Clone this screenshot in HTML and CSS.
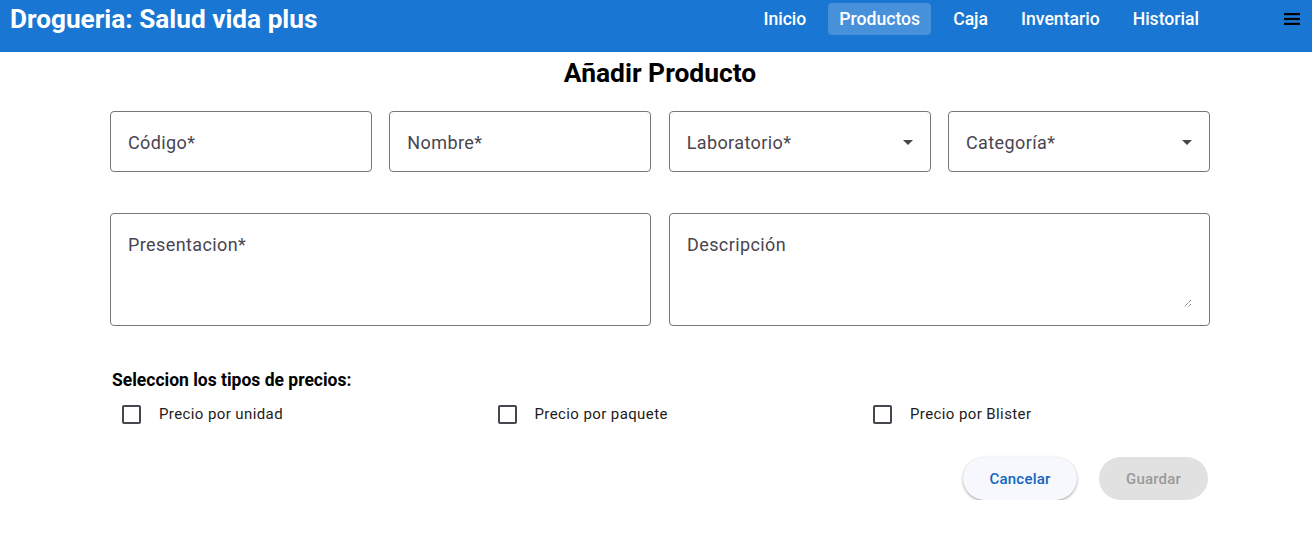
FILE: index.html
```html
<!DOCTYPE html>
<html lang="es">
<head>
<meta charset="utf-8">
<title>Drogueria: Salud vida plus</title>
<link rel="stylesheet" href="styles.css">
</head>
<body>
<header class="topbar">
  <div class="brand">Drogueria: Salud vida plus</div>
  <nav class="nav">
    <a class="nav-item">Inicio</a>
    <a class="nav-item active">Productos</a>
    <a class="nav-item">Caja</a>
    <a class="nav-item">Inventario</a>
    <a class="nav-item">Historial</a>
  </nav>
  <div class="menu-btn">
    <svg width="16" height="12" viewBox="0 0 16 12"><rect x="0" y="0" width="16" height="2.2" fill="#000"/><rect x="0" y="4.9" width="16" height="2.2" fill="#000"/><rect x="0" y="9.8" width="16" height="2.2" fill="#000"/></svg>
  </div>
</header>
<main class="page">
  <h1 class="title">Añadir Producto</h1>
  <div class="row row-4">
    <div class="field"><span class="label">Código*</span></div>
    <div class="field"><span class="label">Nombre*</span></div>
    <div class="field select"><span class="label">Laboratorio*</span><span class="caret"></span></div>
    <div class="field select"><span class="label">Categoría*</span><span class="caret"></span></div>
  </div>
  <div class="row row-2">
    <div class="field tall"><span class="label">Presentacion*</span></div>
    <div class="field tall"><span class="label">Descripción</span>
      <svg class="grip" width="9" height="9" viewBox="0 0 9 9"><path d="M8 1 L1 8 M8 5 L5 8" stroke="#555" stroke-width="1" stroke-dasharray="1 1" fill="none"/></svg>
    </div>
  </div>
  <section class="prices">
    <h2 class="prices-title">Seleccion los tipos de precios:</h2>
    <div class="checks">
      <label class="check"><span class="box"></span><span>Precio por unidad</span></label>
      <label class="check"><span class="box"></span><span>Precio por paquete</span></label>
      <label class="check"><span class="box"></span><span>Precio por Blister</span></label>
    </div>
  </section>
  <div class="actions">
    <button class="btn btn-cancel">Cancelar</button>
    <button class="btn btn-save" disabled>Guardar</button>
  </div>
</main>
</body>
</html>
```
FILE: styles.css
```css
* { box-sizing: border-box; }
body {
  margin: 0;
  font-family: Roboto, "Noto Sans", Arial, sans-serif;
  background: #fff;
  color: #000;
}
.topbar {
  height: 52px;
  background: #1976d2;
  display: flex;
  align-items: flex-start;
  padding: 0 12px 0 10px;
  color: #fff;
}
.brand {
  font-size: 26.2px;
  font-weight: 700;
  line-height: 38px;
}
.nav {
  display: flex;
  gap: 11px;
  margin-left: auto;
  margin-top: 3px;
  margin-right: 74px;
}
.nav-item {
  font-size: 17.6px;
  font-weight: 500;
  line-height: 32px;
  padding: 0 11px;
  border-radius: 4px;
  color: #fff;
}
.nav-item.active { background: rgba(255,255,255,0.2); }
.menu-btn {
  margin-top: 13px;
  line-height: 0;
}
.page {
  width: 1100px;
  margin-left: 110px;
}
.title {
  margin: 0;
  padding-top: 6px;
  text-align: center;
  font-size: 26.4px;
  font-weight: 700;
  line-height: 30px;
}
.row { display: grid; gap: 18px; }
.row-4 { grid-template-columns: repeat(4, 1fr); gap: 17.3px; margin-top: 23px; }
.row-2 { grid-template-columns: repeat(2, 1fr); margin-top: 41px; }
.field {
  position: relative;
  height: 61px;
  border: 1px solid #79747e;
  border-radius: 4px;
  padding: 19px 17px 0 17px;
  font-size: 18px;
  line-height: 24px;
  color: #49454f;
  letter-spacing: 0.4px;
}
.field.tall { height: 113px; }
.caret {
  position: absolute;
  right: 17px;
  top: 28px;
  width: 0; height: 0;
  border-left: 5px solid transparent;
  border-right: 5px solid transparent;
  border-top: 5px solid #49454f;
}
.grip { position: absolute; right: 17px; bottom: 17px; }
.prices { margin-top: 44px; padding-left: 2px; }
.prices-title {
  margin: 0;
  font-size: 17.5px;
  font-weight: 700;
  line-height: 20px;
}
.checks {
  display: grid;
  grid-template-columns: repeat(3, 375.5px);
  margin-top: 14px;
  padding-left: 10px;
}
.check {
  display: flex;
  align-items: center;
  gap: 18px;
  font-size: 15px;
  color: #1d1b20;
  letter-spacing: 0.4px;
  line-height: 20px;
}
.box {
  width: 19px; height: 19px;
  border: 2px solid #49454f;
  border-radius: 2px;
  flex: none;
}
.actions {
  display: flex;
  justify-content: flex-end;
  gap: 22px;
  margin-top: 33px;
  padding-right: 2px;
}
.btn {
  height: 43px;
  border: none;
  border-radius: 22px;
  font-family: inherit;
  font-size: 15px;
  font-weight: 500;
  letter-spacing: 0.2px;
}
.btn-cancel {
  width: 114px;
  background: #f7f8fd;
  color: #1565c0;
  box-shadow: 0 1px 3px rgba(0,0,0,0.3), 0 1px 1px rgba(0,0,0,0.12);
}
.btn-save {
  width: 109px;
  background: #e1e1e1;
  color: #9a9a9a;
}
```
